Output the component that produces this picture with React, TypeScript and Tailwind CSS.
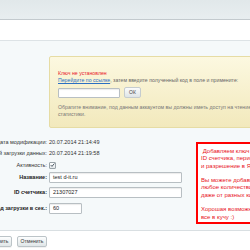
import React from "react";

const font = { fontFamily: '"Liberation Sans", Arial, sans-serif' };

function Label({ children, bold }: { children: React.ReactNode; bold?: boolean }) {
  return (
    <div className={`w-[47px] flex justify-end whitespace-nowrap shrink-0 ${bold ? "font-bold text-[#222]" : "text-[#333]"}`}>
      <span>{children}</span>
    </div>
  );
}

export default function App() {
  return (
    <div className="w-[250px] h-[250px] overflow-hidden bg-white text-[5.5px] leading-[7px]" style={font}>
      {/* top header */}
      <div className="h-[20px] bg-gradient-to-b from-[#e1e8ea] to-[#e8eef0] border-b border-[#c3cace]" />
      <div className="h-[21px] bg-white border-b border-[#dde3e6]" />
      {/* panel */}
      <div className="bg-[#f5f9fa] border-b border-[#d9dfe2] pt-[15px] pb-[6px]">
        <div className="ml-[49px] w-[230px] h-[72px] rounded-[2px] border border-[#e6dca4] bg-gradient-to-b from-[#fcf8e0] to-[#f2e9bc] pl-[8px] pt-[13px] whitespace-nowrap text-[5.2px]">
          <div className="text-[#e8202a]">Ключ не установлен</div>
          <div className="text-[#666]">
            <span className="text-[#2b6fc2] underline">Перейдите по ссылке</span>, затем введите полученный код в поле и примените:
          </div>
          <div className="flex items-center gap-[4px] mt-[3px]">
            <div className="w-[62px] h-[10px] bg-white border border-[#b8bfc3] rounded-[1px] shadow-[inset_0_1px_1px_rgba(0,0,0,0.08)]" />
            <div className="w-[17px] h-[11px] rounded-[2px] border border-[#c5cccf] bg-gradient-to-b from-[#fafbfb] to-[#dfe5e7] flex items-center justify-center text-[#444] text-[5px]">
              ОК
            </div>
          </div>
          <div className="text-[#777] mt-[6px]">Обратите внимание, под данным аккаунтом вы должны иметь доступ на чтение к</div>
          <div className="text-[#777]">статистики.</div>
        </div>

        <div className="flex items-start mt-[8px]">
          <div className="w-[196px] shrink-0">
            <div className="h-[12px] flex items-center gap-[2px]">
              <Label>Дата модификации:</Label>
              <span className="text-[#333]">20.07.2014 21:14:49</span>
            </div>
            <div className="h-[11px] flex items-center gap-[2px]">
              <Label>Дата последней загрузки данных:</Label>
              <span className="text-[#333]">20.07.2014 21:19:58</span>
            </div>
            <div className="h-[12px] flex items-center gap-[2px]">
              <Label>Активность:</Label>
              <div className="w-[7px] h-[7px] border border-[#9aa4a9] rounded-[1px] bg-gradient-to-b from-white to-[#e4e9eb] flex items-center justify-center">
                <svg width="6" height="6" viewBox="0 0 10 10">
                  <path d="M1.5 5.2 L4 7.8 L8.8 2" fill="none" stroke="#3a4a55" strokeWidth="1.8" />
                </svg>
              </div>
            </div>
            <div className="h-[13px] flex items-center gap-[2px]">
              <Label bold>Название:</Label>
              <div className="w-[133px] h-[11px] bg-white border border-[#b8bfc3] rounded-[1px] flex items-center pl-[3px] text-[#222] shadow-[inset_0_1px_1px_rgba(0,0,0,0.08)]">
                test d-it.ru
              </div>
            </div>
            <div className="h-[16px] flex items-center gap-[2px]">
              <Label bold>ID счетчика:</Label>
              <div className="w-[133px] h-[11px] bg-white border border-[#b8bfc3] rounded-[1px] flex items-center pl-[3px] text-[#222] shadow-[inset_0_1px_1px_rgba(0,0,0,0.08)]">
                21307027
              </div>
            </div>
            <div className="h-[16px] flex items-center gap-[2px]">
              <Label bold>Период загрузки в сек.:</Label>
              <div className="w-[33px] h-[11px] bg-white border border-[#b8bfc3] rounded-[1px] flex items-center pl-[3px] text-[#222] shadow-[inset_0_1px_1px_rgba(0,0,0,0.08)]">
                60
              </div>
            </div>
          </div>
          <div className="mt-[6px] h-[82px] w-[120px] shrink-0 border-2 border-[#ff0000] bg-white pl-[3px] pt-[4px] text-[#e8141c] text-[6px] leading-[7.3px] whitespace-nowrap">
            <div>&nbsp;Добавляем ключ и</div>
            <div>ID счетчика, период</div>
            <div>и разрешение в Яндекс</div>
            <div>&nbsp;</div>
            <div>Вы можете добавить</div>
            <div>любое количество счетчиков</div>
            <div>даже от разных компаний</div>
            <div>&nbsp;</div>
            <div>Хорошая возможность собрать</div>
            <div>все в кучу :)</div>
          </div>
        </div>
      </div>
      {/* bottom buttons */}
      <div className="h-[22px] bg-white flex items-center gap-[5px] -ml-[20px] border-b border-[#d5dcdf]">
        <div className="w-[32px] h-[11px] rounded-[2px] border border-[#bcc4c8] bg-gradient-to-b from-[#fdfefe] to-[#e0e6e8] flex items-center justify-center text-[#333] text-[5px] shadow-[0_1px_0_rgba(0,0,0,0.05)]">
          Сохранить
        </div>
        <div className="w-[30px] h-[11px] rounded-[2px] border border-[#bcc4c8] bg-gradient-to-b from-[#fdfefe] to-[#e0e6e8] flex items-center justify-center text-[#333] text-[5px] shadow-[0_1px_0_rgba(0,0,0,0.05)]">
          Отменить
        </div>
      </div>
      <div className="h-[10px] bg-[#e4ebed]" />
    </div>
  );
}
